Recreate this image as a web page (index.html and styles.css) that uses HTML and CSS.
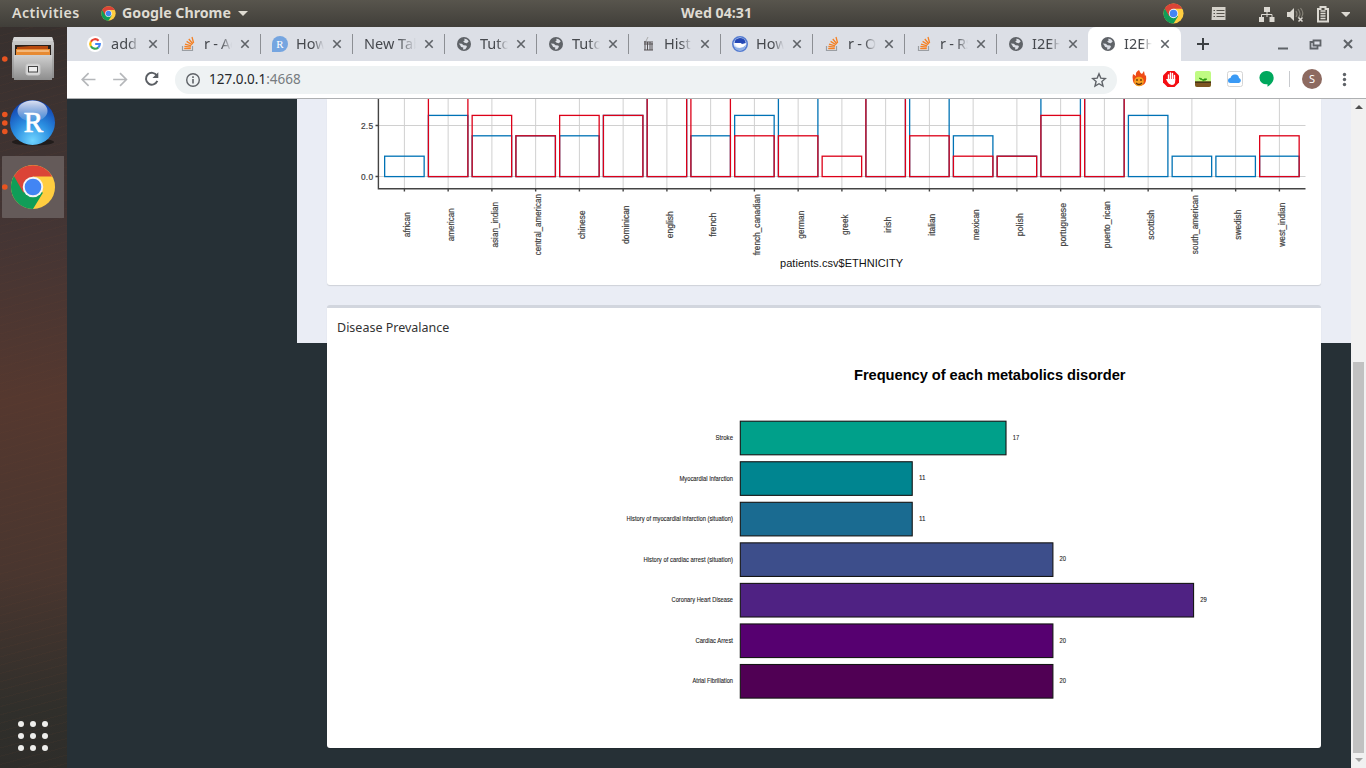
FILE: index.html
```html
<!DOCTYPE html>
<html lang="en">
<head>
<meta charset="utf-8">
<title>Disease Prevalance</title>
<link rel="stylesheet" href="styles.css">
</head>
<body>
<svg class="defs" width="0" height="0">
  <defs>
    <symbol id="chrome" viewBox="0 0 48 48">
      <circle cx="24" cy="24" r="23" fill="#ffcd40"/>
      <path d="M24 24 4.1 12.5A23 23 0 0 0 24 47L34.4 30z" fill="#109d58"/>
      <path d="M4.1 12.5A23 23 0 0 1 44 13H24L14 30z" fill="#db4437"/>
      <circle cx="24" cy="24" r="10.7" fill="#f5f5f5"/>
      <circle cx="24" cy="24" r="8.7" fill="#4285f4"/>
    </symbol>
    <symbol id="globe" viewBox="0 0 16 16">
      <circle cx="8" cy="8" r="7" fill="#5f6368"/>
      <path d="M8.2 2.8C10 2.5 12 3.8 12.7 5.6L10.8 7.2 8.6 6.8 7.2 5.2 8.7 4.4zM2.8 7.6l3 .2 1.7 1.5 2.7.1.8 1.3-1.7 2.6-2.3.1.3-2-2.2-.4-.9-1.8z" fill="#dcdfe6"/>
    </symbol>
    <symbol id="stack" viewBox="0 0 16 16">
      <path d="M2.5 10v4.5h10V10" fill="none" stroke="#9a9ea3" stroke-width="1.2"/>
      <path d="M4.2 12.6h6.6M4.4 10.5l6.4.7M5 8.1l6.2 1.8M6.6 5.4l5.4 3.4M8.8 3l4.1 5M12 1l1.6 6" stroke="#f48024" stroke-width="1.3"/>
    </symbol>
    <symbol id="close" viewBox="0 0 10 10"><path d="M1.3 1.3l7.4 7.4M8.7 1.3 1.3 8.7" stroke="#5f6368" stroke-width="1.6"/></symbol>
    <linearGradient id="metal" x2="0" y2="1"><stop stop-color="#d0d0d0"/><stop offset="1" stop-color="#8d8d8d"/></linearGradient>
    <radialGradient id="orb" cy=".9" r=".85"><stop stop-color="#6fd4ff"/><stop offset=".5" stop-color="#2a8de0"/><stop offset="1" stop-color="#1243b0"/></radialGradient>
    <linearGradient id="gloss" x2="0" y2="1"><stop stop-color="#fff" stop-opacity=".85"/><stop offset="1" stop-color="#fff" stop-opacity=".1"/></linearGradient>
  </defs>
</svg>

<header class="topbar">
  <span class="activities">Activities</span>
  <svg class="app-icon"><use href="#chrome"/></svg>
  <span class="app-name">Google Chrome</span>
  <i class="caret"></i>
  <span class="clock">Wed 04:31</span>
  <svg class="tray-chrome"><use href="#chrome"/></svg>
  <svg class="tray" width="150" height="26" viewBox="0 0 150 26" fill="#dcd9d2">
    <path d="M13 6h12v2H13zM12 6h13.500v13H11.500z" opacity=".95"/>
    <path d="M13.500 9.500h1.500M13.500 12.500h1.500M13.500 15.500h1.500M16.500 9.500h8M16.500 12.500h8M16.500 15.500h8" stroke="#55524b" stroke-width="1"/>
    <path d="M64 6h6v5h-6zM59 16h5v5h-5zM69.500 16h5v5h-5z"/><path d="M67 11v5M61.500 16v-2.500h10.500V16" fill="none" stroke="#dcd9d2"/>
    <path d="M87 11h3l4-4v13l-4-4h-3z"/>
    <path d="M96 10q2 3 0 6M98 8q4 5 0 9M100.500 7q4 5 1 9" fill="none" stroke="#858278" stroke-width="1.200"/>
    <path d="M98.500 16.500l4 4M102.500 16.500l-4 4" stroke="#dcd9d2" stroke-width="1.500"/>
    <path d="M118 8h2.500V6h5v2h2.500v12.500h-10z" fill="none" stroke="#dcd9d2" stroke-width="2"/>
    <path d="M120.500 10h5M120.500 12.500h5M120.500 15h5M120.500 17.500h5" stroke="#dcd9d2" stroke-width="1.300"/>
    <path d="M141 11h10l-5 5z"/>
  </svg>
</header>

<div class="desktop">
  <nav class="dock">
    <div class="launcher files">
      <svg width="67" height="60" viewBox="0 0 67 60">
        <circle cx="4.800" cy="32" r="2.800" fill="#e95420"/>
        <path d="M14 10h38l2 6v35H12V16z" fill="url(#metal)"/>
        <path d="M14 10h38l1.500 4h-41z" fill="#d6d6d6"/>
        <path d="M15 18h36v10H15z" fill="#2b211b"/>
        <path d="M17 20l13-1h18v3H17z" fill="#b84a0e"/><path d="M16 22h34v7H16z" fill="#e78a32"/><path d="M17 24h32" stroke="#ffe4c0"/>
        <path d="M14 28h38v25H14z" fill="url(#metal)"/>
        <rect x="26" y="37" width="14" height="11" rx="2" fill="#d9d9d9" stroke="#c8c8c8"/><rect x="28.500" y="39.500" width="9" height="5.500" fill="#eee" stroke="#444"/>
      </svg>
    </div>
    <div class="launcher">
      <svg width="67" height="60" viewBox="0 2.5 67 60">
        <g fill="#e95420"><circle cx="4.800" cy="26" r="2.800"/><circle cx="4.800" cy="34.500" r="2.800"/><circle cx="4.800" cy="43" r="2.800"/></g>
        <ellipse cx="33" cy="53.500" rx="21" ry="3.500" fill="#211c1b"/>
        <circle cx="32.500" cy="34" r="22.500" fill="url(#orb)"/>
        <ellipse cx="32.500" cy="22.500" rx="15" ry="10.500" fill="url(#gloss)"/>
        <text class="r-letter" x="33.500" y="43" text-anchor="middle">R</text>
      </svg>
    </div>
    <div class="launcher active">
      <svg width="67" height="62" viewBox="0 0 67 62">
        <circle cx="4.800" cy="31" r="2.800" fill="#e95420"/>
        <use href="#chrome" x="10" y="8" width="46" height="46"/>
      </svg>
    </div>
    <svg class="apps" width="36" height="36" viewBox="0 0 36 36" fill="#eeeeec">
      <circle cx="6" cy="6" r="3"/><circle cx="18" cy="6" r="3"/><circle cx="30" cy="6" r="3"/>
      <circle cx="6" cy="18" r="3"/><circle cx="18" cy="18" r="3"/><circle cx="30" cy="18" r="3"/>
      <circle cx="6" cy="30" r="3"/><circle cx="18" cy="30" r="3"/><circle cx="30" cy="30" r="3"/>
    </svg>
  </nav>

  <main class="browser">
    <div class="tabs">
      <div class="tab"><svg class="fav" viewBox="0 0 16 16"><circle cx="8" cy="8" r="8" fill="#fff"/><g fill="none" stroke-width="2.200"><path d="M11.600 4.700A4.800 4.800 0 0 0 3.900 5.700" stroke="#ea4335"/><path d="M3.900 5.600a4.800 4.800 0 0 0 0 4.800" stroke="#fbbc05"/><path d="M3.900 10.300a4.800 4.800 0 0 0 7.400 1.200" stroke="#34a853"/><path d="M11.200 11.600A4.800 4.800 0 0 0 12.800 8H8.200" stroke="#4285f4"/></g></svg><span class="title">add</span><svg class="x"><use href="#close"/></svg></div>
      <div class="tab"><svg class="fav"><use href="#stack"/></svg><span class="title tight">r - Ac</span><svg class="x"><use href="#close"/></svg></div>
      <div class="tab"><svg class="fav" viewBox="0 0 16 16"><path d="M0 16V8a8 8 0 1 1 8 8z" fill="#75a5e0"/><text class="fav-r" x="8" y="12" text-anchor="middle">R</text></svg><span class="title">How</span><svg class="x"><use href="#close"/></svg></div>
      <div class="tab"><span class="title wide">New Tab</span><svg class="x"><use href="#close"/></svg></div>
      <div class="tab"><svg class="fav"><use href="#globe"/></svg><span class="title">Tuto</span><svg class="x"><use href="#close"/></svg></div>
      <div class="tab"><svg class="fav"><use href="#globe"/></svg><span class="title">Tuto</span><svg class="x"><use href="#close"/></svg></div>
      <div class="tab"><svg class="fav" viewBox="0 0 16 16"><path d="M4 6h9M4 8h9M5 5v9M7.500 6v8M10 6v8M12 7v7M4 14h9" stroke="#555052" fill="none"/><path d="M8 1l-2 4" stroke="#aaa"/></svg><span class="title">Hist</span><svg class="x"><use href="#close"/></svg></div>
      <div class="tab"><svg class="fav" viewBox="0 0 16 16"><circle cx="8" cy="8" r="7.200" fill="#e6eefb" stroke="#547bd0" stroke-width="1.600"/><path d="M2.500 7q0-4.500 5.500-5 5 0 5.800 5L10 8 7.500 7z" fill="#2448b5"/><path d="M2.500 7h6l2 1.500 3.500-1q-1 4-5 4T2.500 7z" fill="#fff"/><path d="M2 9q2 3.500 6 3 4-.5 6-3.500-1 6-6 6T2 9z" fill="#8fb0e6"/></svg><span class="title">How</span><svg class="x"><use href="#close"/></svg></div>
      <div class="tab"><svg class="fav"><use href="#stack"/></svg><span class="title tight">r - O</span><svg class="x"><use href="#close"/></svg></div>
      <div class="tab"><svg class="fav"><use href="#stack"/></svg><span class="title tight">r - RS</span><svg class="x"><use href="#close"/></svg></div>
      <div class="tab last"><svg class="fav"><use href="#globe"/></svg><span class="title">I2EH</span><svg class="x"><use href="#close"/></svg></div>
      <div class="tab current"><svg class="fav"><use href="#globe"/></svg><span class="title">I2EH</span><svg class="x"><use href="#close"/></svg></div>
      <svg class="window-buttons" width="185" height="34" viewBox="0 0 185 34" fill="none" stroke="#5f6368" stroke-width="2">
        <path d="M22 11v12M16 17h12" stroke="#3c4043"/>
        <path d="M97 21.500h10"/>
        <path d="M132.500 13.500h7v5h-7zM132 15h-2.500v6.500h7V19" stroke-width="1.800"/>
        <path d="M163 13l8 8M171 13l-8 8"/>
      </svg>
    </div>

    <div class="toolbar">
      <svg width="110" height="37" viewBox="0 0 110 37" fill="none" stroke-width="1.700">
        <path d="M29 18.500H16M22 12l-6.500 6.500L22 25M47 18.500h13M54 12l6.500 6.500L54 25" stroke="#b5b7ba"/>
        <path d="M91.500 14.500A6 6 0 1 0 92 20" stroke="#5a5e63" stroke-width="2"/><path d="M93 11v6h-6z" fill="#5a5e63"/>
      </svg>
      <div class="address">
        <svg width="16" height="16" viewBox="0 0 16 16"><circle cx="8" cy="8" r="6.300" fill="none" stroke="#5f6368" stroke-width="1.400"/><path d="M8 7v4.500M8 4.300V6" stroke="#5f6368" stroke-width="1.600"/></svg>
        <span class="url">127.0.0.1<span class="port">:4668</span></span>
        <svg class="star" width="16" height="16" viewBox="0 0 16 16"><path d="M8 1.800l1.800 4.300 4.600.4-3.500 3 1.100 4.600L8 11.700l-4 2.400 1.100-4.600-3.500-3 4.600-.4z" fill="none" stroke="#5f6368" stroke-width="1.400"/></svg>
      </div>
      <svg class="extensions" width="249" height="37" viewBox="1117 61 249 37">
        <path d="M1133 81q-1-4 0-7l3 2q-1-4 3-6 1 3 3 4l2-3 1 5 1-1q1 8-3 10-4 2-7 0-3-2-3-4z" fill="#ee4b16"/><circle cx="1139" cy="81.500" r="4.800" fill="#f8a020"/><path d="M1137 79v2M1141 79v2M1136 83q3 3 6 0" stroke="#64320b" stroke-width="1.300" fill="none"/>
        <path d="M1167.500 71h7l4.500 4.500v7l-4.500 4.500h-7l-4.500-4.500v-7z" fill="#f40d12"/><path d="M1168.500 80v-5M1170.500 80v-7M1172.500 80v-6.500M1174.500 80v-4.500" stroke="#fff" stroke-width="1.400" stroke-linecap="round"/><path d="M1167.800 79h7.400v2q0 4-3.500 4-2.500 0-4.200-3l-1.500-3z" fill="#fff"/>
        <rect x="1195" y="71" width="16" height="16" rx="2" fill="#c0fb83"/><path d="M1195 81.500h16v3.500q0 2-2 2h-12q-2 0-2-2z" fill="#7d5421"/><path d="M1195 81.500h16v1.500h-16z" fill="#463616"/><path d="M1203 81.500v-1.500q-3 0-4-2 3 0 4 2 1-2 4-1-1 1.500-4 1.500z" fill="#28970e" stroke="#28970e" stroke-width=".6"/>
        <rect x="1227.500" y="71.500" width="15" height="15" rx="2" fill="#fff" stroke="#d5d5d5"/><path d="M1230.500 83a2.500 2.500 0 0 1 0-5q1-4 5-3.500 3 0 3.500 3.500a2.600 2.600 0 0 1 0 5z" fill="#3a9af5"/>
        <path d="M1267 71a6.700 6.700 0 0 1 6.700 6.700q0 5-6.200 9v-2.500a6.700 6.700 0 1 1-.5-13.200z" fill="#00a85d"/>
        <path d="M1289.500 71v16" stroke="#c8cace"/>
        <circle cx="1312" cy="79" r="10" fill="#8d6a60"/><text class="avatar" x="1312" y="83" text-anchor="middle">S</text>
        <g fill="#5f6368"><circle cx="1344.500" cy="74.500" r="1.700"/><circle cx="1344.500" cy="79.500" r="1.700"/><circle cx="1344.500" cy="84.500" r="1.700"/></g>
      </svg>
    </div>

    <div class="page">
      <section class="content">
        <article class="card first">
          <svg id="ethnicity" width="994" height="186" viewBox="327 99 994 186"></svg>
        </article>
        <article class="card second">
          <h3 class="card-title">Disease Prevalance</h3>
          <svg id="disorders" width="994" height="406" viewBox="327 342 994 406"></svg>
        </article>
      </section>
      <div class="scrollbar"><i class="up"></i><i class="thumb"></i><i class="down"></i></div>
    </div>
  </main>
</div>
<script src="charts.js"></script>
</body>
</html>
```
FILE: styles.css
```css
* { box-sizing: border-box; }
body { margin: 0; width: 1366px; height: 768px; overflow: hidden; font-family: "Noto Sans", sans-serif; background: #263036; }
svg { display: block; flex: none; }
.defs { position: absolute; }

.topbar { height: 27px; display: flex; align-items: center; padding-left: 12px; color: #dfdbd2; background: linear-gradient(#58554d, #403e39); font-size: 14.2px; font-weight: 700; line-height: 20px; white-space: nowrap; }
.activities, .app-name, .clock { padding-bottom: 1px; }
.activities { width: 89px; letter-spacing: .45px; font-weight: 600; }
.app-icon { width: 15px; height: 15px; }
.app-name { width: 111px; margin-left: 6px; }
.caret { margin-left: 5px; border: 5px solid transparent; border-top-color: #dfdbd2; border-bottom: 0; }
.clock { margin-left: 433px; width: 74px; }
.tray-chrome { width: 21px; height: 21px; margin-left: 408px; }
.tray { margin-left: 16px; }

.desktop { display: flex; height: 741px; }
.dock { width: 67px; display: flex; flex-direction: column; background: repeating-linear-gradient(165deg, rgba(105, 65, 45, .1) 0 1px, transparent 1px 8px), linear-gradient(#37302e, #443534 28%, #55382f 50%, #49362f 74%, #302f2b 92%, #2e2d2a); }
.launcher { height: 62px; margin-bottom: 3px; }
.launcher.files { height: 61px; }
.launcher.active { background: linear-gradient(#645a59, #645a59) 2px 0 / 62px 62px no-repeat; border-radius: 4px; }
.r-letter { font: 29px "Liberation Serif", serif; fill: #fff; stroke: #fff; stroke-width: .7px; }
.fav-r { font: 11px "Liberation Serif", serif; fill: #fff; }
.apps { margin: auto 0 14px 15px; }

.browser { flex: 1; min-width: 0; }
.tabs { display: flex; height: 34px; padding-left: 9px; background: #dcdfe6; }
.tab { display: flex; align-items: center; width: 92px; height: 34px; padding-left: 12px; }
.tab + .tab { background: linear-gradient(#8c8f94, #8c8f94) left center / 1px 20px no-repeat; }
.tab:first-child { padding-left: 11px; }
.fav { width: 16px; height: 16px; margin-right: 8px; }
.title { width: 28px; height: 22px; font-size: 14.5px; line-height: 21px; color: #46494e; overflow: hidden; white-space: nowrap; -webkit-mask-image: linear-gradient(90deg, #000 60%, transparent); mask-image: linear-gradient(90deg, #000 60%, transparent); }
.tab:first-child .title { width: 29px; }
.tight { letter-spacing: -.3px; }
.title.wide { width: 52px; padding-left: 0; -webkit-mask-image: linear-gradient(90deg, #000 65%, transparent); mask-image: linear-gradient(90deg, #000 65%, transparent); }
.x { width: 10px; height: 10px; margin-left: 8px; }
.tab.current { width: 93px; background: #fff; border-radius: 8px 8px 0 0; }

.toolbar { display: flex; align-items: center; height: 37px; background: #fff; }
.toolbar > svg:first-child { width: 108px; }
.address { display: flex; align-items: center; width: 942px; height: 28px; border-radius: 14px; padding: 0 10px; background: #eef2f3; }
.url { margin-left: 8px; padding-bottom: 1px; font-size: 13.5px; color: #25282c; }
.port { color: #777c80; }
.star { margin-left: auto; }
.avatar { font: 11px "Noto Sans", sans-serif; fill: #fff; }

.page { display: flex; justify-content: flex-end; height: 670px; border-top: 1px solid #aeb0b2; background: #263036; }
.content { width: 1054px; height: 244px; padding-left: 30px; background: #eaedf5; }
.card { width: 994px; background: #fff; box-shadow: 0 1px 1px rgba(0, 0, 0, .12); }
.card.first { height: 186px; border-radius: 0 0 3px 3px; }
.card.second { height: 443px; margin-top: 20px; border-top: 3px solid #d2d6de; border-radius: 3px; }
.card-title { height: 34px; margin: 0; padding: 10px 10px 0; font: 12.5px/20px "Noto Sans", sans-serif; color: #333; white-space: nowrap; }
.scrollbar { display: flex; flex-direction: column; align-items: center; width: 15px; height: 670px; background: #f1f1f1; }
.up { margin-top: 6px; border: 4px solid transparent; border-bottom-color: #505050; border-top: 0; }
.thumb { width: 11px; height: 391px; margin-top: 253px; background: #c1c1c1; }
.down { margin-top: 5px; border: 4px solid transparent; border-top-color: #a3a3a3; border-bottom: 0; }

#ethnicity text, #disorders text { font-family: "Liberation Sans", Arial, sans-serif; }
.grid { stroke: #d0d0d0; stroke-width: 1; fill: none; }
.axis { stroke: #444; stroke-width: 1.4; fill: none; }
.series-blue, .series-red { fill: none; stroke-width: 1.3; }
.series-blue { stroke: #0072b5; }
.series-red { stroke: #dc0018; }
.tick-label { font-size: 8.3px; fill: #3f3f3f; stroke: #3f3f3f; stroke-width: .2px; }
.axis-title { font-size: 11px; fill: #111; }
.bar { stroke: #151515; stroke-width: 1.1; }
.bar-label { font-size: 6.6px; fill: #222; stroke: #222; stroke-width: .1px; }
.chart-title { font-size: 14.67px; font-weight: 700; fill: #000; }
```
FILE: charts.js
```js
const NS = "http://www.w3.org/2000/svg";

function add(parent, tag, attrs, text) {
  const el = document.createElementNS(NS, tag);
  for (const key in attrs) el.setAttribute(key, attrs[key]);
  if (text !== undefined) el.textContent = text;
  parent.appendChild(el);
}

// name, blue count, red count, label length; 9 runs past the top of the view
const groups = [
  ["african", 1, 0, 25], ["american", 3, 9, 33], ["asian_indian", 2, 3, 45.5],
  ["central_american", 2, 2, 61], ["chinese", 2, 3, 28.5], ["dominican", 3, 3, 38.5],
  ["english", 9, 9, 27], ["french", 2, 9, 24], ["french_canadian", 3, 2, 61],
  ["german", 9, 2, 28], ["greek", 0, 1, 20.5], ["irish", 9, 9, 16],
  ["italian", 9, 2, 22], ["mexican", 2, 1, 30.5], ["polish", 1, 1, 23],
  ["portuguese", 9, 3, 43.5], ["puerto_rican", 9, 9, 47], ["scottish", 3, 0, 30],
  ["south_american", 1, 0, 59], ["swedish", 1, 0, 30], ["west_indian", 1, 2, 44]
];
const eth = document.getElementById("ethnicity");
const base = 176.6, unit = 20.4;
add(eth, "path", { class: "grid", d: "M378 125.5H1305.500M378 176.500H1305.500" });
groups.forEach(([name, blue, red, len], i) => {
  const cx = 404.4 + i * 43.75;
  add(eth, "path", { class: "grid", d: `M${cx} 99V188` });
  [[blue, "series-blue"], [red, "series-red"]].forEach(([n, cls]) => {
    if (n) add(eth, "rect", { class: cls, x: cx - 19.75, y: base - n * unit, width: 39.5, height: n * unit });
  });
  add(eth, "path", { class: "axis", d: `M${cx} 189V191.500` });
  add(eth, "text", {
    class: "tick-label", "text-anchor": "middle", textLength: len, lengthAdjust: "spacingAndGlyphs",
    transform: `translate(${cx + 5.6} 224.7) rotate(-90)`
  }, name);
});
add(eth, "path", { class: "axis", d: "M378.400 99V188.700H1305.500M375.500 125.500H378M375.500 176.500H378" });
add(eth, "text", { class: "tick-label", x: 361, y: 128.7, textLength: 12 }, "2.5");
add(eth, "text", { class: "tick-label", x: 361, y: 179.7, textLength: 12 }, "0.0");
add(eth, "text", { class: "axis-title", x: 780, y: 267, textLength: 123 }, "patients.csv$ETHNICITY");

const disorders = [
  ["Stroke", 17, "#00a08a", 17.5], ["Myocardial Infarction", 11, "#008590", 53.5],
  ["History of myocardial infarction (situation)", 11, "#1a6b91", 106.5],
  ["History of cardiac arrest (situation)", 20, "#3d4e8b", 89.5],
  ["Coronary Heart Disease", 29, "#4f2283", 61.5], ["Cardiac Arrest", 20, "#560070", 37.5],
  ["Atrial Fibrillation", 20, "#500054", 40.5]
];
const dis = document.getElementById("disorders");
add(dis, "text", { class: "chart-title", x: 854, y: 380, textLength: 271.5 }, "Frequency of each metabolics disorder");
disorders.forEach(([name, count, fill, len], i) => {
  const y = 421.2 + i * 40.55, width = count * 15.63;
  add(dis, "rect", { class: "bar", x: 740.3, y, width, height: 33.6, fill });
  add(dis, "text", { class: "bar-label", x: 733 - len, y: y + 18.8, textLength: len, lengthAdjust: "spacingAndGlyphs" }, name);
  add(dis, "text", { class: "bar-label", x: 740.3 + width + 6.7, y: y + 18.6, textLength: 6.5, lengthAdjust: "spacingAndGlyphs" }, count);
});
```
